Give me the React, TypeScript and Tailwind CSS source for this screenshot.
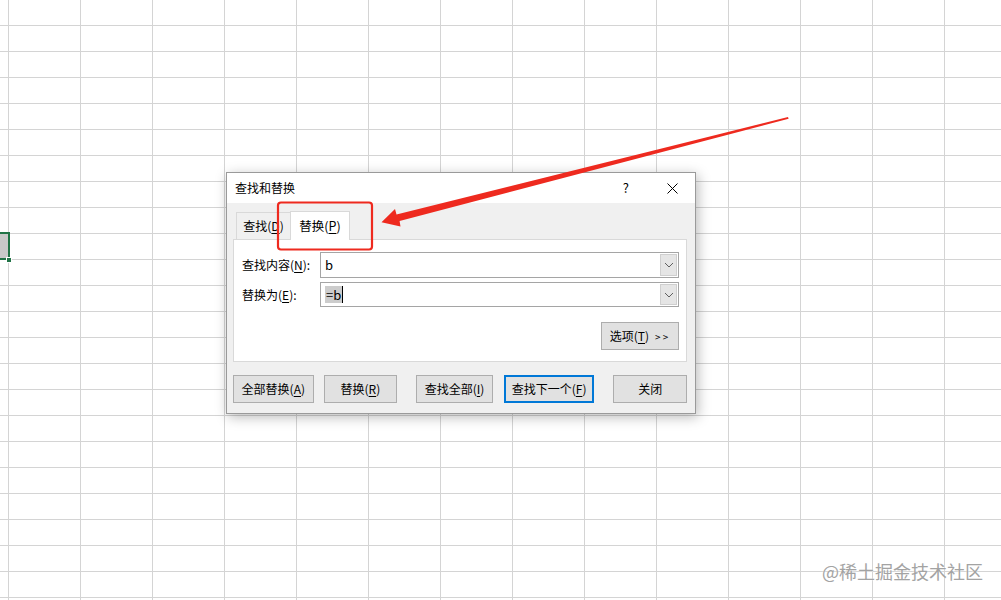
import React from "react";

const Mn = ({ k }: { k: string }) => <span className="underline underline-offset-2">{k}</span>;

const Btn = ({
  children,
  className = "",
  primary = false,
}: {
  children: React.ReactNode;
  className?: string;
  primary?: boolean;
}) => (
  <button
    className={
      "h-[28px] flex items-center justify-center bg-[#e1e1e1] text-[12px] text-black " +
      (primary ? "border-2 border-[#0078d7] " : "border border-[#adadad] ") +
      className
    }
  >
    {children}
  </button>
);

const Chevron = () => (
  <svg width="10" height="6" viewBox="0 0 10 6" fill="none">
    <path d="M1 1l4 4 4-4" stroke="#606060" strokeWidth="1" />
  </svg>
);

const ComboBox = ({ children, h }: { children: React.ReactNode; h: string }) => (
  <div className={"flex w-[359px] border border-[#a5a5a5] bg-white " + h}>
    <div className="flex-1 flex items-center pl-[4px] text-[13px]">{children}</div>
    <div className="w-[17px] m-px flex items-center justify-center bg-[#e5e5e5] border border-[#cfcfcf]">
      <Chevron />
    </div>
  </div>
);

export default function App() {
  return (
    <div
      className="relative w-full h-[600px] overflow-hidden bg-white bg-[linear-gradient(to_right,#d4d4d4_1px,transparent_1px),linear-gradient(to_bottom,#d4d4d4_1px,transparent_1px)] bg-[size:72px_26px] bg-[position:8px_25px]"
      style={{ fontFamily: '"Noto Sans CJK SC", "Noto Sans", sans-serif' }}
    >
      {/* selected cell */}
      <div className="absolute left-[-70px] top-[232px] w-[80px] h-[28px] border-2 border-[#217346] bg-[#c8c8c8]" />
      <div className="absolute left-[6px] top-[257px] w-[6px] h-[6px] bg-[#217346] border border-white" />

      {/* dialog */}
      <div className="absolute left-[226px] top-[172px] w-[470px] flex flex-col border border-[#9a9a9a] bg-[#f0f0f0] shadow-[2px_3px_12px_rgba(0,0,0,0.28)]">
        <div className="h-[30px] bg-white flex items-center pl-[8px] text-[12px] text-black">
          <span>查找和替换</span>
          <span className="ml-auto mr-[38px] text-[13px]">?</span>
          <svg className="mr-[17px]" width="11" height="11" viewBox="0 0 11 11">
            <path d="M0.5 0.5l10 10M10.5 0.5l-10 10" stroke="#000" strokeWidth="1" />
          </svg>
        </div>

        <div className="flex flex-col pl-[6px] pr-[8px] pt-[8px] pb-[10px]">
          <div className="h-[28px] flex items-end pl-[3px] text-[12px]">
            <div className="w-[54px] h-[27px] flex items-center justify-center border-l border-t border-[#d9d9d9] bg-[#f0f0f0]">
              查找(<Mn k="D" />)
            </div>
            <div className="relative w-[60px] h-[29px] -mb-px flex items-center justify-center border-l border-t border-r border-[#d9d9d9] bg-white text-[12.5px]">
              替换(<Mn k="P" />)
            </div>
          </div>

          <div className="h-[123px] border border-[#d9d9d9] bg-white flex flex-col pt-[12px] pl-[8px] pr-[7px] text-[12px]">
            <div className="flex items-center">
              <div className="w-[78px]">
                查找内容(<Mn k="N" />):
              </div>
              <ComboBox h="h-[26px]">b</ComboBox>
            </div>
            <div className="flex items-center mt-[4px]">
              <div className="w-[78px]">
                替换为(<Mn k="E" />):
              </div>
              <ComboBox h="h-[25px]">
                <span className="bg-[#cccccc] leading-[17px] px-px">=b</span>
                <span className="w-px h-[17px] bg-black" />
              </ComboBox>
            </div>
            <div className="flex justify-end mt-[15px]">
              <Btn className="w-[78px] gap-[6px]">
                <span>
                  选项(<Mn k="T" />)
                </span>
                <span className="text-[10px] tracking-[2px]">&gt;&gt;</span>
              </Btn>
            </div>
          </div>

          <div className="flex mt-[13px]">
            <Btn className="w-[81px]">
              全部替换(<Mn k="A" />)
            </Btn>
            <Btn className="w-[74px] ml-[10px]">
              替换(<Mn k="R" />)
            </Btn>
            <Btn className="w-[77px] ml-[19px]">
              查找全部(<Mn k="I" />)
            </Btn>
            <Btn primary className="w-[91px] ml-[11px]">
              查找下一个(<Mn k="F" />)
            </Btn>
            <Btn className="w-[74px] ml-[19px]">关闭</Btn>
          </div>
        </div>
      </div>

      {/* annotation */}
      <svg className="absolute inset-0 pointer-events-none" width="1001" height="600" viewBox="0 0 1001 600">
        <rect x="278" y="202.5" width="94" height="47" rx="3" fill="none" stroke="#ee2a1f" strokeWidth="2.2" />
        <polygon
          points="381.5,222.3 395,209 396.5,214.4 788,117 788.6,118.8 399.6,221 400.5,226.5"
          fill="#ee2a1f"
        />
      </svg>

      {/* watermark */}
      <div className="absolute left-[822px] top-[558px] text-[18px] leading-[26px] text-[#a3a3a3] [text-shadow:0_0_2px_#fff]">
        @稀土掘金技术社区
      </div>
    </div>
  );
}
